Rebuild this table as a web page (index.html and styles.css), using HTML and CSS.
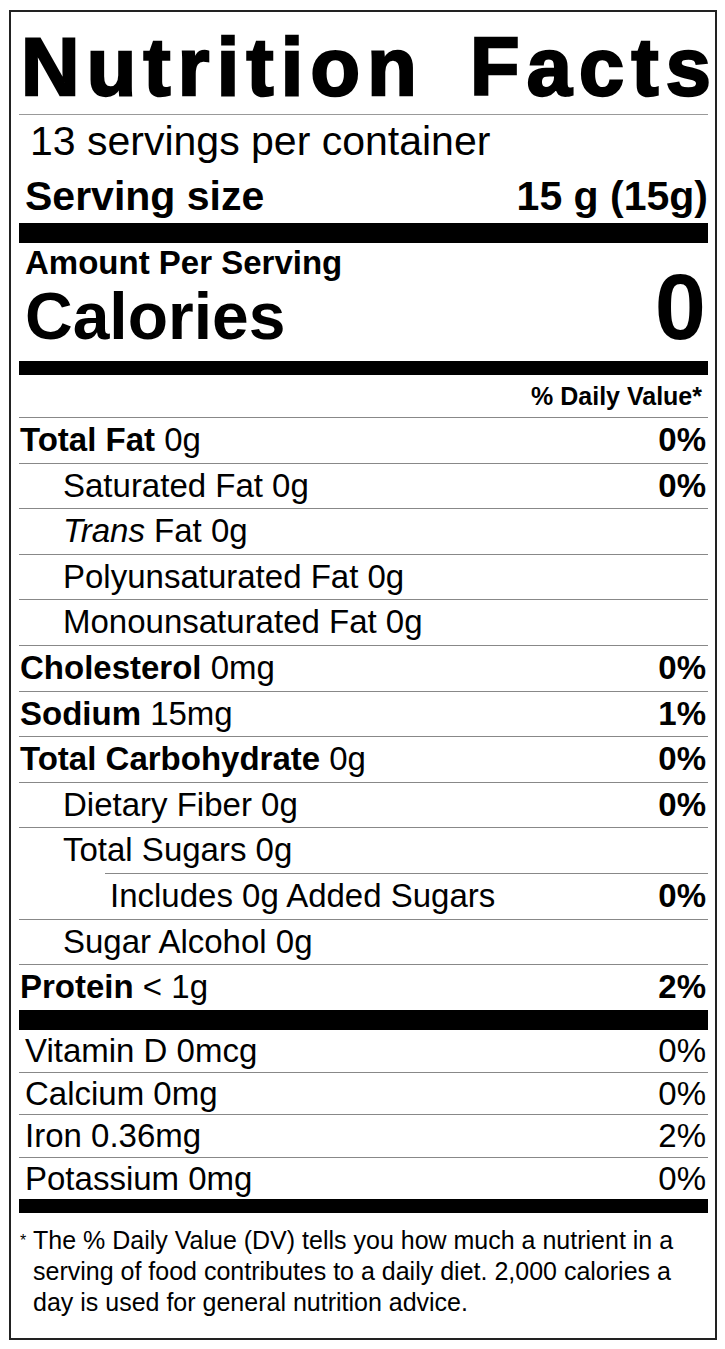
FILE: index.html
```html
<!DOCTYPE html>
<html>
<head>
<meta charset="utf-8">
<link rel="stylesheet" href="styles.css">
</head>
<body>
<div class="label">
  <div class="title">Nutrition Facts</div>
  <div class="servings">13 servings per container</div>
  <div class="serving-size"><span>Serving size</span><span>15 g (15g)</span></div>
  <div class="bar bar-lg"></div>
  <div class="amount">Amount Per Serving</div>
  <div class="cal-row"><span class="cal-label">Calories</span><span class="cal-value">0</span></div>
  <div class="bar bar-md"></div>
  <div class="dv-head">% Daily Value*</div>
  <div class="row"><span><b>Total Fat</b> 0g</span><b>0%</b></div>
  <div class="row indent"><span>Saturated Fat 0g</span><b>0%</b></div>
  <div class="row indent"><span><i>Trans</i> Fat 0g</span></div>
  <div class="row indent"><span>Polyunsaturated Fat 0g</span></div>
  <div class="row indent"><span>Monounsaturated Fat 0g</span></div>
  <div class="row"><span><b>Cholesterol</b> 0mg</span><b>0%</b></div>
  <div class="row"><span><b>Sodium</b> 15mg</span><b>1%</b></div>
  <div class="row"><span><b>Total Carbohydrate</b> 0g</span><b>0%</b></div>
  <div class="row indent"><span>Dietary Fiber 0g</span><b>0%</b></div>
  <div class="row indent"><span>Total Sugars 0g</span></div>
  <div class="row indent2"><span>Includes 0g Added Sugars</span><b>0%</b></div>
  <div class="row indent"><span>Sugar Alcohol 0g</span></div>
  <div class="row"><span><b>Protein</b> &lt; 1g</span><b>2%</b></div>
  <div class="bar bar-lg"></div>
  <div class="vit first"><span>Vitamin D 0mcg</span><span>0%</span></div>
  <div class="vit"><span>Calcium 0mg</span><span>0%</span></div>
  <div class="vit"><span>Iron 0.36mg</span><span>2%</span></div>
  <div class="vit"><span>Potassium 0mg</span><span>0%</span></div>
  <div class="bar bar-md"></div>
  <div class="foot"><span class="star">*</span>The % Daily Value (DV) tells you how much a nutrient in a<br>serving of food contributes to a daily diet. 2,000 calories a<br>day is used for general nutrition advice.</div>
</div>
</body>
</html>
```

FILE: styles.css
```css
* { box-sizing: border-box; }
body {
  margin: 0;
  background: #fff;
  font-family: "Liberation Sans", Arial, sans-serif;
  color: #000;
}
.label {
  margin: 10px 0 0 9px;
  width: 708px;
  height: 1330px;
  border: 2px solid #222;
  padding: 0 7px 0 8px;
}
.title {
  height: 103px;
  padding-top: 5px;
  padding-left: 2px;
  line-height: 100px;
  font-size: 81px;
  font-weight: bold;
  letter-spacing: 7.3px;
  word-spacing: 16px;
  -webkit-text-stroke: 2.5px #000;
  white-space: nowrap;
  border-bottom: 1px solid #999;
}
.servings {
  height: 52px;
  line-height: 52px;
  font-size: 41px;
  padding-left: 11px;
}
.serving-size {
  height: 56px;
  padding-top: 2px;
  line-height: 54px;
  font-size: 41px;
  font-weight: bold;
  display: flex;
  justify-content: space-between;
  padding-left: 6px;
}
.bar { background: #000; }
.bar-lg { height: 20px; }
.bar-md { height: 14px; }
.amount {
  height: 40px;
  line-height: 40px;
  font-size: 33px;
  font-weight: bold;
  padding-left: 6px;
}
.cal-row {
  display: flex;
  justify-content: space-between;
  align-items: baseline;
  height: 78px;
  line-height: 66px;
  font-weight: bold;
  padding-left: 6px;
  padding-right: 2px;
}
.cal-label { font-size: 66px; }
.cal-value { font-size: 92px; line-height: 48px; }
.dv-head {
  height: 42px;
  line-height: 42px;
  font-size: 25px;
  font-weight: bold;
  text-align: right;
  padding-right: 6px;
}
.row {
  display: flex;
  justify-content: space-between;
  height: 45.6px;
  line-height: 44.6px;
  border-top: 1px solid #888;
  font-size: 33px;
  padding-left: 1px;
  padding-right: 2px;
}
.indent { padding-left: 44px; }
.indent2 { margin-left: 86px; padding-left: 5px; }
.vit {
  display: flex;
  justify-content: space-between;
  height: 42.3px;
  line-height: 41.3px;
  border-top: 1px solid #888;
  font-size: 33px;
  padding-left: 6px;
  padding-right: 2px;
}
.vit.first { border-top: none; line-height: 42px; }
.foot {
  padding: 12px 10px 0 14px;
  text-indent: -13px;
  font-size: 25px;
  line-height: 31px;
  white-space: nowrap;
}
.star {
  display: inline-block;
  text-indent: 0;
  width: 13px;
  font-size: 16px;
  vertical-align: 3px;
}
```
